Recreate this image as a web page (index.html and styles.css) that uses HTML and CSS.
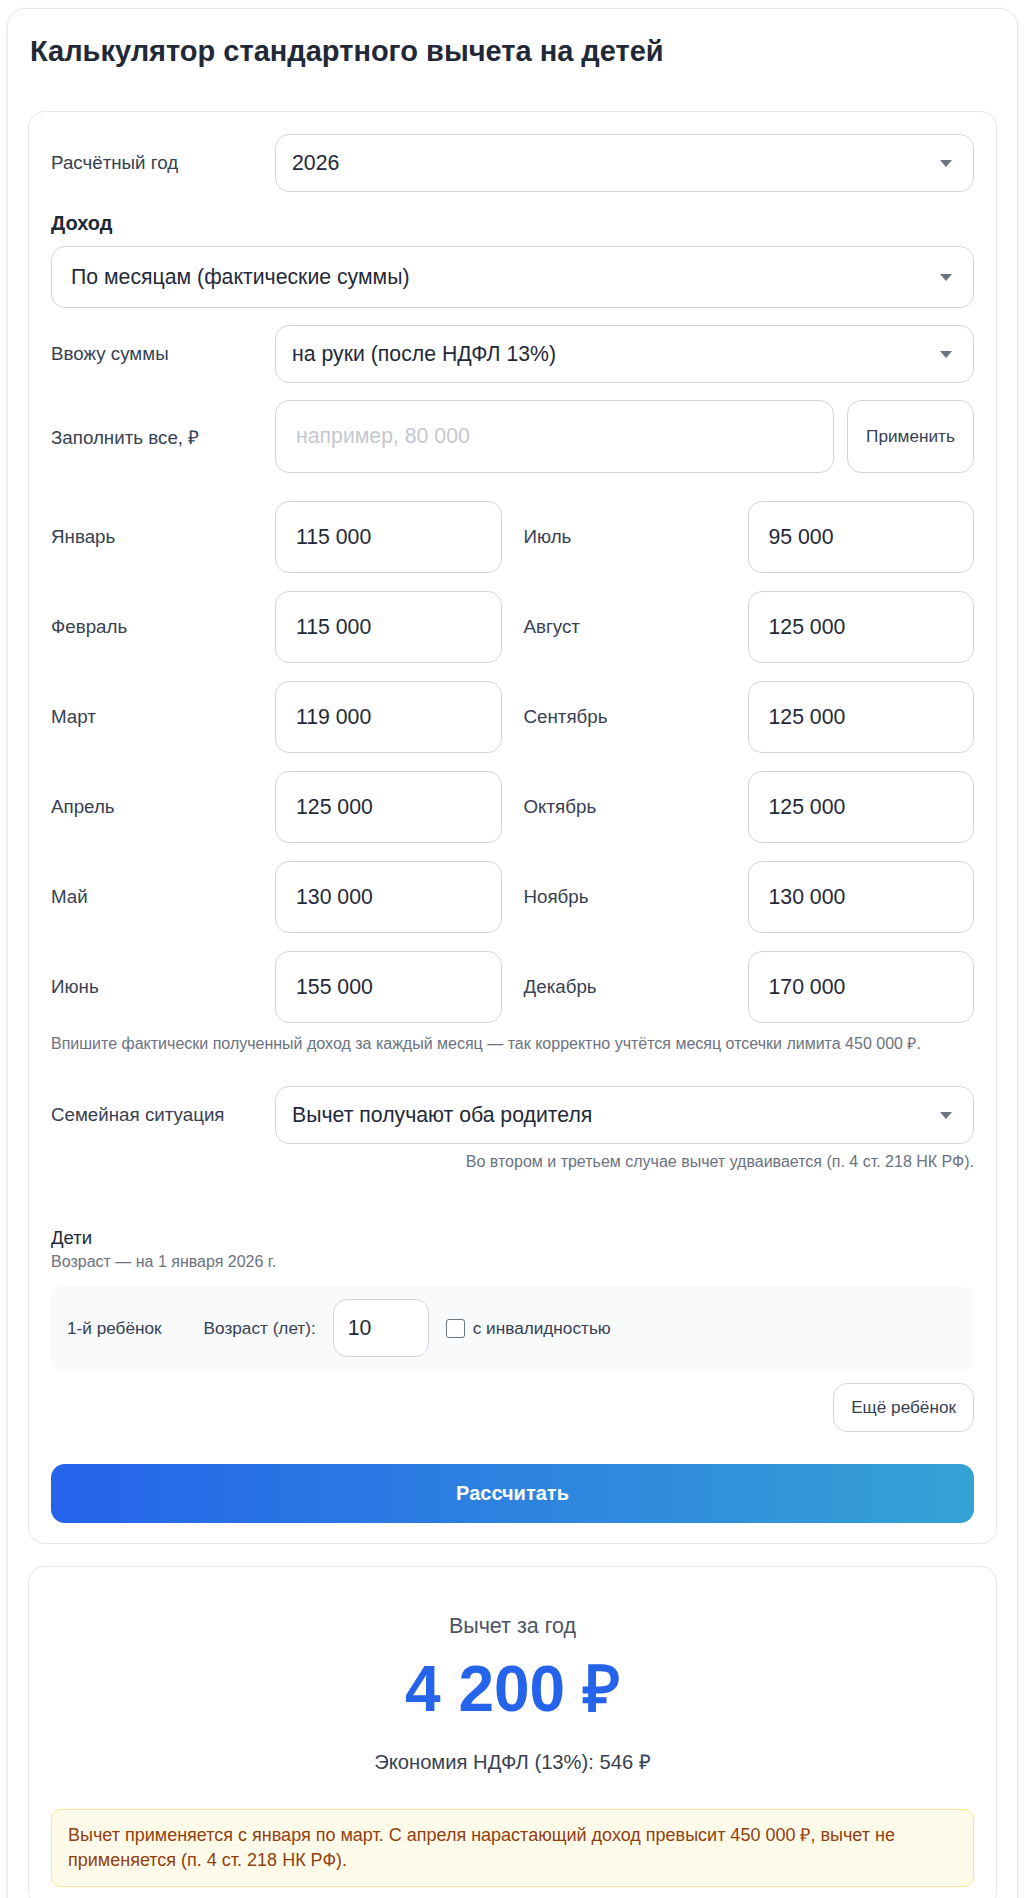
FILE: index.html
```html
<!DOCTYPE html>
<html lang="ru">
  <head>
    <meta charset="utf-8" />
    <title>Калькулятор стандартного вычета на детей</title>
    <link rel="stylesheet" href="styles.css">
  </head>
  <body>
    <div class="app">
      <h1>Калькулятор стандартного вычета на детей</h1>

      <div class="panel">
        <div class="row">
          <label for="year">Расчётный год</label>
          <div class="select-wrap">
            <select id="year">
              <option>2026</option>
              <option>2025</option>
            </select>
          </div>
        </div>

        <div class="section-title">Доход</div>
        <div class="select-wrap wide">
          <select id="incomeMode">
            <option>По месяцам (фактические суммы)</option>
            <option>Одна сумма в месяц</option>
          </select>
        </div>

        <div class="row row-mode">
          <label for="amountType">Ввожу суммы</label>
          <div class="select-wrap">
            <select id="amountType">
              <option>на руки (после НДФЛ 13%)</option>
              <option>до вычета НДФЛ</option>
            </select>
          </div>
        </div>

        <div class="row row-fill">
          <label for="fillAll">Заполнить все, ₽</label>
          <div class="fill-group">
            <input type="text" id="fillAll" placeholder="например, 80 000" />
            <button class="btn-light" onclick="fillAll()">Применить</button>
          </div>
        </div>

        <!-- доход по месяцам -->
        <div class="months">
          <label>Январь</label><input type="text" class="month" value="115 000" />
          <label>Июль</label><input type="text" class="month" value="95 000" />
          <label>Февраль</label><input type="text" class="month" value="115 000" />
          <label>Август</label><input type="text" class="month" value="125 000" />
          <label>Март</label><input type="text" class="month" value="119 000" />
          <label>Сентябрь</label><input type="text" class="month" value="125 000" />
          <label>Апрель</label><input type="text" class="month" value="125 000" />
          <label>Октябрь</label><input type="text" class="month" value="125 000" />
          <label>Май</label><input type="text" class="month" value="130 000" />
          <label>Ноябрь</label><input type="text" class="month" value="130 000" />
          <label>Июнь</label><input type="text" class="month" value="155 000" />
          <label>Декабрь</label><input type="text" class="month" value="170 000" />
        </div>
        <p class="hint">
          Впишите фактически полученный доход за каждый месяц — так корректно учтётся месяц отсечки лимита 450 000 ₽.
        </p>

        <div class="row row-family">
          <label for="family">Семейная ситуация</label>
          <div class="select-wrap">
            <select id="family">
              <option>Вычет получают оба родителя</option>
              <option>Единственный родитель</option>
              <option>Один родитель отказался в пользу другого</option>
            </select>
          </div>
        </div>
        <p class="hint hint-right">
          Во втором и третьем случае вычет удваивается (п. 4 ст. 218 НК РФ).
        </p>

        <div class="children-title">Дети</div>
        <div class="children-sub">Возраст — на 1 января 2026 г.</div>

        <div class="child">
          <span class="child-name">1-й ребёнок</span>
          <span class="child-label">Возраст (лет):</span>
          <input type="text" class="child-age" value="10" />
          <label class="check">
            <input type="checkbox" />
            с инвалидностью
          </label>
        </div>

        <div class="add-row">
          <button class="btn-light btn-add">Ещё ребёнок</button>
        </div>

        <button class="btn-primary" onclick="calculate()">Рассчитать</button>
      </div>

      <div class="panel result">
        <div class="result-label">Вычет за год</div>
        <div class="result-value" id="deduction">4 200 ₽</div>
        <div class="result-save">Экономия НДФЛ (13%): <span id="saving">546 ₽</span></div>
        <div class="notice">
          Вычет применяется с января по март. С апреля нарастающий доход превысит 450 000 ₽, вычет не применяется (п. 4 ст. 218 НК РФ).
        </div>
      </div>
    </div>

    <script>
      function fillAll() {
        const v = document.getElementById("fillAll").value;
        if (!v) return;
        document.querySelectorAll(".month").forEach((el) => (el.value = v));
      }
      function calculate() {
      }
    </script>
  </body>
</html>
```

FILE: styles.css
```css
body {
  margin: 0;
  padding: 8px 10px 0 7px;
  font-family: "Liberation Sans", Arial, sans-serif;
  color: #1f2937;
  background: #ffffff;
}
.app {
  border: 1px solid #e5e7eb;
  border-radius: 18px;
  padding: 20px 20px 22px;
  box-shadow: 0 1px 4px rgba(0, 0, 0, 0.06);
}
h1 {
  margin: 6px 0 44px 2px;
  font-size: 29px;
  line-height: 32px;
  font-weight: bold;
  color: #1f2937;
}
.panel {
  border: 1px solid #e5e7eb;
  border-radius: 16px;
  padding: 22px 22px 20px;
  background: #fff;
}
.row {
  display: grid;
  grid-template-columns: 202px 1fr;
  column-gap: 22px;
  align-items: center;
}
.row label,
.months label {
  font-size: 18.75px;
  color: #374151;
}
.select-wrap {
  position: relative;
}
.select-wrap::after {
  content: "";
  position: absolute;
  right: 22px;
  top: 50%;
  margin-top: -3px;
  border-left: 6.5px solid transparent;
  border-right: 6.5px solid transparent;
  border-top: 7px solid #6b7280;
  pointer-events: none;
}
select {
  appearance: none;
  -webkit-appearance: none;
  width: 100%;
  height: 58px;
  padding: 0 44px 0 16px;
  border: 1px solid #d1d5db;
  border-radius: 14px;
  background: #fff;
  font-family: inherit;
  font-size: 21.25px;
  color: #1f2937;
}
.select-wrap.wide select {
  height: 62px;
  padding-left: 19px;
}
.section-title {
  margin: 20px 0 12px;
  font-size: 20px;
  line-height: 22px;
  font-weight: bold;
  color: #1f2937;
}
.row-mode {
  margin-top: 17px;
}
.row-fill {
  margin-top: 17px;
}
.fill-group {
  display: flex;
  gap: 13px;
}
input[type="text"] {
  box-sizing: border-box;
  height: 72px;
  padding: 0 20px;
  border: 1px solid #d1d5db;
  border-radius: 14px;
  font-family: inherit;
  font-size: 21.25px;
  color: #1f2937;
  background: #fff;
  min-width: 0;
}
input::placeholder {
  color: #c4c8cf;
}
#fillAll {
  flex: 1;
  height: 73px;
}
.btn-light {
  background: #fff;
  border: 1px solid #d1d5db;
  border-radius: 14px;
  font-family: inherit;
  font-size: 17.2px;
  color: #374151;
  cursor: pointer;
}
.fill-group .btn-light {
  width: 127px;
  height: 73px;
}
.months {
  margin-top: 28px;
  display: grid;
  grid-template-columns: 202px 1fr 202px 1fr;
  column-gap: 22px;
  row-gap: 18px;
  align-items: center;
}
.months input {
  width: 100%;
}
.hint {
  margin: 11px 0 0;
  font-size: 16px;
  line-height: 20px;
  color: #6b7280;
}
.hint-right {
  margin-top: 8px;
  text-align: right;
}
.row-family {
  margin-top: 32px;
}
.children-title {
  margin-top: 55px;
  font-size: 18.5px;
  line-height: 22px;
  color: #1f2937;
}
.children-sub {
  margin-top: 4px;
  font-size: 16px;
  line-height: 18px;
  color: #6b7280;
}
.child {
  margin-top: 15px;
  display: flex;
  align-items: center;
  padding: 13px 16px 14px;
  background: #f8fafc;
  border-radius: 12px;
}
.child-name,
.child-label {
  font-size: 17.2px;
  color: #374151;
}
.child-name {
  margin-right: 42px;
}
.child-label {
  margin-right: 17px;
}
input.child-age {
  width: 96px;
  height: 58px;
  padding: 0 14px;
}
.check {
  display: flex;
  align-items: center;
  gap: 8px;
  margin-left: 17px;
  font-size: 17.2px;
  color: #374151;
}
.check input {
  appearance: none;
  -webkit-appearance: none;
  width: 19px;
  height: 19px;
  margin: 0;
  border: 1.5px solid #6b7280;
  border-radius: 3px;
  background: #fff;
}
.add-row {
  margin-top: 12px;
  display: flex;
  justify-content: flex-end;
}
.btn-add {
  height: 49px;
  padding: 0 17px;
}
.btn-primary {
  display: block;
  width: 100%;
  height: 59px;
  margin-top: 32px;
  border: none;
  border-radius: 14px;
  background: linear-gradient(90deg, #2563eb, #35a2d4);
  color: #fff;
  font-family: inherit;
  font-size: 20px;
  font-weight: bold;
  cursor: pointer;
}
.result {
  margin-top: 22px;
  padding-top: 47px;
  text-align: center;
}
.result-label {
  font-size: 21.5px;
  line-height: 24px;
  color: #4b5563;
}
.result-value {
  margin-top: 13px;
  font-size: 64px;
  line-height: 77px;
  font-weight: bold;
  color: #2563eb;
}
.result-save {
  margin-top: 22px;
  font-size: 20.2px;
  line-height: 24px;
  color: #374151;
}
.notice {
  margin-top: 35px;
  padding: 13px 16px;
  background: #fffbeb;
  border: 1px solid #fde68a;
  border-radius: 10px;
  text-align: left;
  font-size: 18px;
  line-height: 25px;
  color: #92400e;
}
```
